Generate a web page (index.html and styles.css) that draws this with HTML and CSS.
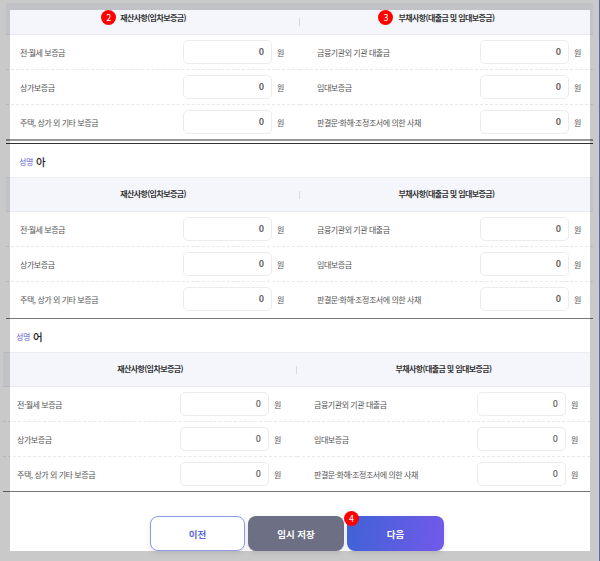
FILE: index.html
```html
<!DOCTYPE html>
<html lang="ko">
<head>
<meta charset="utf-8">
<title>재산사항</title>
<link rel="stylesheet" href="styles.css">
</head>
<body>
<div class="page">
  <section class="block block-first">
    <div class="table">
      <div class="heads">
        <div class="head head-left"><span class="head-text"><span class="badge badge-two">2</span>재산사항(임차보증금)</span></div>
        <div class="head"><span class="head-text"><span class="badge badge-three">3</span>부채사항(대출금 및 임대보증금)</span></div>
      </div>
      <div class="rows">
        <div class="row row-left"><span class="label">전·월세 보증금</span><input class="amount" value="0"><span class="unit">원</span></div>
        <div class="row row-right"><span class="label">금융기관외 기관 대출금</span><input class="amount" value="0"><span class="unit">원</span></div>
        <div class="row row-left"><span class="label">상가보증금</span><input class="amount" value="0"><span class="unit">원</span></div>
        <div class="row row-right"><span class="label">임대보증금</span><input class="amount" value="0"><span class="unit">원</span></div>
        <div class="row row-left row-last"><span class="label">주택, 상가 외 기타 보증금</span><input class="amount" value="0"><span class="unit">원</span></div>
        <div class="row row-right row-last"><span class="label">판결문·화해·조정조서에 의한 사채</span><input class="amount" value="0"><span class="unit">원</span></div>
      </div>
    </div>
  </section>

  <section class="block block-second">
    <div class="name"><span class="name-key">성명</span><span class="name-value">아</span></div>
    <div class="heads">
      <div class="head head-left">재산사항(임차보증금)</div>
      <div class="head">부채사항(대출금 및 임대보증금)</div>
    </div>
    <div class="rows">
      <div class="row row-left"><span class="label">전·월세 보증금</span><input class="amount" value="0"><span class="unit">원</span></div>
      <div class="row row-right"><span class="label">금융기관외 기관 대출금</span><input class="amount" value="0"><span class="unit">원</span></div>
      <div class="row row-left"><span class="label">상가보증금</span><input class="amount" value="0"><span class="unit">원</span></div>
      <div class="row row-right"><span class="label">임대보증금</span><input class="amount" value="0"><span class="unit">원</span></div>
      <div class="row row-left row-last"><span class="label">주택, 상가 외 기타 보증금</span><input class="amount" value="0"><span class="unit">원</span></div>
      <div class="row row-right row-last"><span class="label">판결문·화해·조정조서에 의한 사채</span><input class="amount" value="0"><span class="unit">원</span></div>
    </div>
  </section>

  <section class="block block-third">
    <div class="name"><span class="name-key">성명</span><span class="name-value">어</span></div>
    <div class="heads">
      <div class="head head-left">재산사항(임차보증금)</div>
      <div class="head">부채사항(대출금 및 임대보증금)</div>
    </div>
    <div class="rows">
      <div class="row row-left"><span class="label">전·월세 보증금</span><input class="amount" value="0"><span class="unit">원</span></div>
      <div class="row row-right"><span class="label">금융기관외 기관 대출금</span><input class="amount" value="0"><span class="unit">원</span></div>
      <div class="row row-left"><span class="label">상가보증금</span><input class="amount" value="0"><span class="unit">원</span></div>
      <div class="row row-right"><span class="label">임대보증금</span><input class="amount" value="0"><span class="unit">원</span></div>
      <div class="row row-left row-last"><span class="label">주택, 상가 외 기타 보증금</span><input class="amount" value="0"><span class="unit">원</span></div>
      <div class="row row-right row-last"><span class="label">판결문·화해·조정조서에 의한 사채</span><input class="amount" value="0"><span class="unit">원</span></div>
    </div>
  </section>

  <div class="actions">
    <button class="btn btn-prev">이전</button>
    <button class="btn btn-save">임시 저장</button>
    <button class="btn btn-next"><span class="badge badge-btn">4</span>다음</button>
  </div>
  <div class="frame"></div>
  <div class="edge"></div>
</div>
</body>
</html>
```
FILE: styles.css
```css
* { box-sizing: border-box; }
html, body { margin: 0; padding: 0; }
body {
  background: #fff;
  font-family: "Noto Sans CJK KR", "Noto Sans", sans-serif;
  color: #555;
}
.page {
  position: relative;
  width: 600px;
  height: 561px;
  overflow: hidden;
  padding-top: 3px;
  background: #fff;
}
.block { width: 587px; margin-left: 6px; }
.block-first { border-bottom: 1px solid #333; padding-bottom: 2px; }
.block-first .table { border-bottom: 2px solid #999; }
.block-second { border-bottom: 1px solid #777; }
.block-second .rows { padding-bottom: 2px; }
.block-third { border-bottom: 1px solid #777; margin-left: 3px; }
.name {
  height: 33px;
  display: flex;
  align-items: center;
  padding: 1px 0 0 13px;
  gap: 3px;
}
.name-key { font-size: 8px; color: #5f5fd0; letter-spacing: -0.4px; }
.name-value { font-size: 10.5px; font-weight: 500; color: #222; }
.heads {
  display: grid;
  grid-template-columns: 294px 293px;
  height: 35px;
  background: #f4f6fb;
  border-top: 1px solid #eceef3;
  border-bottom: 1px solid #e8eaf0;
}
.block-first .heads { height: 32px; border-top: 0; }
.head {
  position: relative;
  display: flex;
  align-items: center;
  justify-content: center;
  font-size: 8px;
  font-weight: 700;
  color: #333;
  letter-spacing: -0.6px;
  padding-bottom: 2px;
}
.block-first .head { align-items: flex-start; padding-top: 9px; }
.head-text { position: relative; }
.head-left::after {
  content: "";
  position: absolute;
  right: 0;
  top: 50%;
  height: 8px;
  margin-top: -4px;
  border-right: 1px solid #d8dae0;
}
.block-first .head-left::after { top: 15px; margin-top: 0; }
.rows { display: grid; grid-template-columns: 294px 293px; }
.row {
  display: flex;
  align-items: center;
  height: 35px;
  border-bottom: 1px dashed #e8e8e8;
}
.row-last { border-bottom: 0; height: 34px; }
.row-left { padding: 0 16px 0 14px; }
.row-right { padding: 0 12px 0 17px; }
.label { flex: 1; font-size: 8px; color: #555; letter-spacing: -0.45px; white-space: nowrap; }
.amount {
  width: 89px;
  height: 24px;
  border: 1px solid #ececec;
  border-radius: 5px;
  background: #fff;
  padding: 0 7px 1px 0;
  text-align: right;
  font-family: "Noto Sans CJK KR", "Noto Sans", sans-serif;
  font-size: 9px;
  font-weight: 700;
  color: #666;
  outline: 0;
}
.block-third .amount { font-weight: 500; }
.unit { width: 7px; margin-left: 5px; font-size: 8px; color: #555; white-space: nowrap; }
.badge {
  position: absolute;
  display: inline-flex;
  align-items: center;
  justify-content: center;
  width: 15px;
  height: 15px;
  border-radius: 50%;
  background: #f00;
  color: #fff;
  font-size: 9px;
  font-weight: 400;
  letter-spacing: 0;
}
.badge-two { left: -19px; top: 50%; margin-top: -7.5px; }
.badge-three { left: -20px; top: 50%; margin-top: -7.5px; }
.badge-btn { left: -3px; top: -5px; }
.actions {
  display: flex;
  gap: 3px;
  justify-content: center;
  margin: 24px 0 0 -6px;
}
.btn {
  position: relative;
  width: 96px;
  height: 35px;
  border: 0;
  border-radius: 8px;
  font-family: "Noto Sans CJK KR", "Noto Sans", sans-serif;
  font-size: 9.5px;
  font-weight: 700;
  padding: 0;
  box-shadow: 0 2px 5px rgba(80, 80, 120, .15);
}
.btn-prev { width: 95px; background: #fff; border: 1px solid #8c9ceb; color: #5a68d8; }
.btn-save { background: #6d7084; color: #fff; }
.btn-next { width: 97px; background: linear-gradient(100deg, #3f63d6, #7359ea); color: #fff; }
.frame {
  position: absolute;
  left: 0;
  top: 0;
  width: 598.5px;
  height: 561px;
  border-style: solid;
  border-color: rgba(0, 0, 0, .21);
  border-width: 10px 9.5px 10px 10px;
  pointer-events: none;
}
.edge {
  position: absolute;
  top: 0;
  right: 0;
  bottom: 0;
  width: 1.5px;
  background: #5a68ae;
}
```
